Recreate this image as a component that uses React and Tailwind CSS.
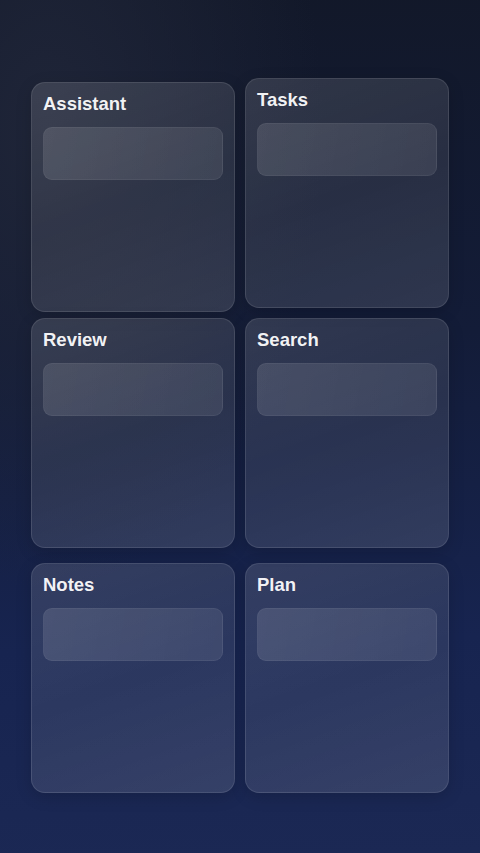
import React from "react";

function Card({ title, className = "" }) {
  return (
    <div
      className={
        "h-[230px] rounded-[14px] border border-white/10 bg-[linear-gradient(160deg,rgba(255,255,255,0.13),rgba(255,255,255,0.09)_50%,rgba(255,255,255,0.12))] px-[11px] pt-[9px] shadow-[0_4px_16px_rgba(0,0,0,0.15)] " +
        className
      }
    >
      <div className="text-[18.5px] font-bold leading-6 text-white/95" style={{ fontFamily: '"Liberation Sans", Arial, sans-serif' }}>
        {title}
      </div>
      <div className="mt-[11px] h-[53px] rounded-[9px] border border-white/5 bg-[linear-gradient(100deg,rgba(255,255,255,0.12),rgba(255,255,255,0.09))]" />
    </div>
  );
}

export default function App() {
  return (
    <div className="min-h-[853px] w-[480px] bg-[radial-gradient(ellipse_at_10%_15%,#1f2538_0%,transparent_45%),linear-gradient(178deg,#121829_0%,#131c38_40%,#172450_75%,#1b2854_100%)] px-[31px]">
      <div className="flex gap-[10px]">
        <div className="flex w-[204px] flex-col pt-[82px]">
          <Card title="Assistant" />
          <Card title="Review" className="mt-[6px]" />
          <Card title="Notes" className="mt-[15px]" />
        </div>
        <div className="flex w-[204px] flex-col pt-[78px]">
          <Card title="Tasks" />
          <Card title="Search" className="mt-[10px]" />
          <Card title="Plan" className="mt-[15px]" />
        </div>
      </div>
    </div>
  );
}
